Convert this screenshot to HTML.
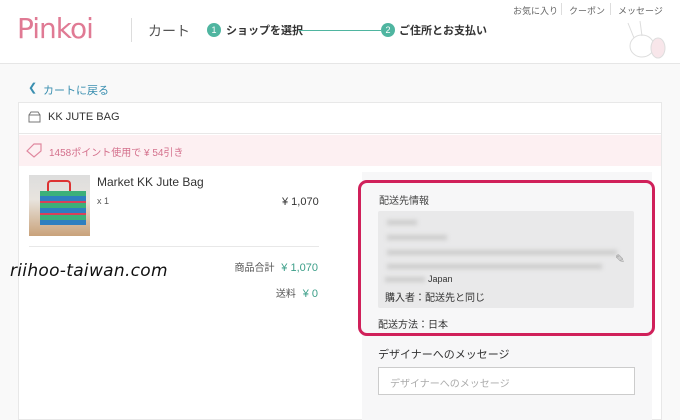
<!DOCTYPE html>
<html><head><meta charset="utf-8"><style>
*{margin:0;padding:0;box-sizing:border-box}
body{width:680px;height:420px;overflow:hidden;background:#f9f9f9;font-family:"Liberation Sans","Noto Sans CJK JP",sans-serif;position:relative;color:#333}
.a{position:absolute}
</style></head><body>
<div class="a" style="left:0;top:0;width:680px;height:64px;background:#fff;border-bottom:1px solid #e6e6e6"></div>
<div class="a" style="left:17px;top:12px;font-size:28px;color:#e07a94;font-family:'DejaVu Sans',sans-serif;letter-spacing:-1px">Pinkoi</div>
<div class="a" style="left:131px;top:18px;width:1px;height:24px;background:#ddd"></div>
<div class="a" style="left:148px;top:21px;font-size:14px;color:#555">カート</div>
<div class="a" style="left:207px;top:23px;width:14px;height:14px;border-radius:50%;background:#4fb5a0;color:#fff;font-size:9px;text-align:center;line-height:14px">1</div>
<div class="a" style="left:226px;top:22px;font-size:11px;font-weight:bold;color:#333">ショップを選択</div>
<div class="a" style="left:299px;top:30px;width:82px;height:1px;background:#4fb5a0"></div>
<div class="a" style="left:381px;top:23px;width:14px;height:14px;border-radius:50%;background:#4fb5a0;color:#fff;font-size:9px;text-align:center;line-height:14px">2</div>
<div class="a" style="left:399px;top:22px;font-size:11px;font-weight:bold;color:#333">ご住所とお支払い</div>
<div class="a" style="left:513px;top:4px;font-size:9px;color:#666">お気に入り</div>
<div class="a" style="left:561px;top:3px;width:1px;height:12px;background:#ddd"></div>
<div class="a" style="left:569px;top:4px;font-size:9px;color:#666">クーポン</div>
<div class="a" style="left:610px;top:3px;width:1px;height:12px;background:#ddd"></div>
<div class="a" style="left:618px;top:4px;font-size:9px;color:#666">メッセージ</div>
<svg class="a" style="left:620px;top:18px" width="50" height="45"><g fill="none" stroke="#ddd" stroke-width="1"><ellipse cx="22" cy="28" rx="12" ry="11"/><path d="M14 20 L8 5 M22 18 L20 3"/><ellipse cx="38" cy="30" rx="7" ry="10" fill="#f8e6ea"/></g></svg>
<div class="a" style="left:28px;top:81px;font-size:11px;color:#3a8fb0">❮</div>
<div class="a" style="left:43px;top:82px;font-size:11px;color:#3a8fb0">カートに戻る</div>
<div class="a" style="left:18px;top:102px;width:644px;height:318px;background:#fff;border:1px solid #e8e8e8"></div>
<div class="a" style="left:18px;top:133px;width:644px;height:1px;background:#e8e8e8"></div>
<svg class="a" style="left:28px;top:111px" width="13" height="12"><rect x="1" y="4" width="11" height="7" fill="none" stroke="#777"/><path d="M1 4 L3 1 H10 L12 4" fill="none" stroke="#777"/></svg>
<div class="a" style="left:48px;top:111px;font-size:11px;color:#333">KK JUTE BAG</div>
<div class="a" style="left:19px;top:135px;width:642px;height:31px;background:#fdf0f2"></div>
<svg class="a" style="left:25px;top:142px" width="18" height="16"><path d="M2 9 L9 2 H16 V9 L9 15 Z" fill="none" stroke="#e0889f" stroke-width="1.2"/></svg>
<div class="a" style="left:49px;top:144px;font-size:10px;color:#d4708c">1458ポイント使用で ¥ 54引き</div>
<div class="a" style="left:29px;top:175px;width:61px;height:61px;background:linear-gradient(#ddd 0,#e8e4de 40%,#c9a27a 100%)"></div>
<div class="a" style="left:47px;top:180px;width:24px;height:14px;border:2px solid #d33;border-bottom:none;border-radius:4px 4px 0 0"></div>
<div class="a" style="left:40px;top:191px;width:46px;height:34px;background:repeating-linear-gradient(#3cb07a 0 5px,#2e7fc0 5px 10px,#d9405a 10px 12px)"></div>
<div class="a" style="left:97px;top:175px;font-size:12px;color:#333">Market KK Jute Bag</div>
<div class="a" style="left:97px;top:196px;font-size:9px;color:#555">x 1</div>
<div class="a" style="left:282px;top:196px;font-size:11px;color:#333">¥ 1,070</div>
<div class="a" style="left:29px;top:246px;width:290px;height:1px;background:#e8e8e8"></div>
<div class="a" style="right:362px;top:259px;font-size:10px;color:#555;white-space:nowrap">商品合計 <span style="color:#3b9e88;font-size:11px;margin-left:4px">¥ 1,070</span></div>
<div class="a" style="right:362px;top:285px;font-size:10px;color:#555;white-space:nowrap">送料 <span style="color:#3b9e88;font-size:11px;margin-left:4px">¥ 0</span></div>
<div class="a" style="left:10px;top:261px;font-size:17px;font-style:italic;color:#111;font-family:'DejaVu Sans',sans-serif;letter-spacing:0.3px">riihoo-taiwan.com</div>
<div class="a" style="left:362px;top:172px;width:290px;height:248px;background:#f7f7f8"></div>
<div class="a" style="left:358px;top:180px;width:297px;height:156px;border:3px solid #d0205a;border-radius:9px;background:#f7f7f8"></div>
<div class="a" style="left:379px;top:192px;font-size:10px;color:#444">配送先情報</div>
<div class="a" style="left:378px;top:211px;width:256px;height:97px;background:#e9e9ea;border-radius:2px"></div>
<div class="a" style="left:387px;top:220px;width:30px;height:5px;background:#ccc;filter:blur(2px)"></div>
<div class="a" style="left:387px;top:235px;width:60px;height:5px;background:#ccc;filter:blur(2px)"></div>
<div class="a" style="left:387px;top:250px;width:230px;height:5px;background:#ccc;filter:blur(2px)"></div>
<div class="a" style="left:387px;top:264px;width:215px;height:5px;background:#ccc;filter:blur(2px)"></div>
<div class="a" style="left:385px;top:277px;width:40px;height:5px;background:#ccc;filter:blur(2px)"></div>
<div class="a" style="left:428px;top:274px;font-size:9px;color:#333">Japan</div>
<div class="a" style="left:385px;top:289px;font-size:10px;color:#333">購入者：配送先と同じ</div>
<div class="a" style="left:615px;top:252px;font-size:12px;color:#999">✎</div>
<div class="a" style="left:378px;top:316px;font-size:10px;color:#333">配送方法：日本</div>
<div class="a" style="left:378px;top:346px;font-size:11px;color:#333">デザイナーへのメッセージ</div>
<div class="a" style="left:378px;top:367px;width:257px;height:28px;background:#fff;border:1px solid #ccc"></div>
<div class="a" style="left:390px;top:375px;font-size:10px;color:#aaa">デザイナーへのメッセージ</div>
</body></html>
